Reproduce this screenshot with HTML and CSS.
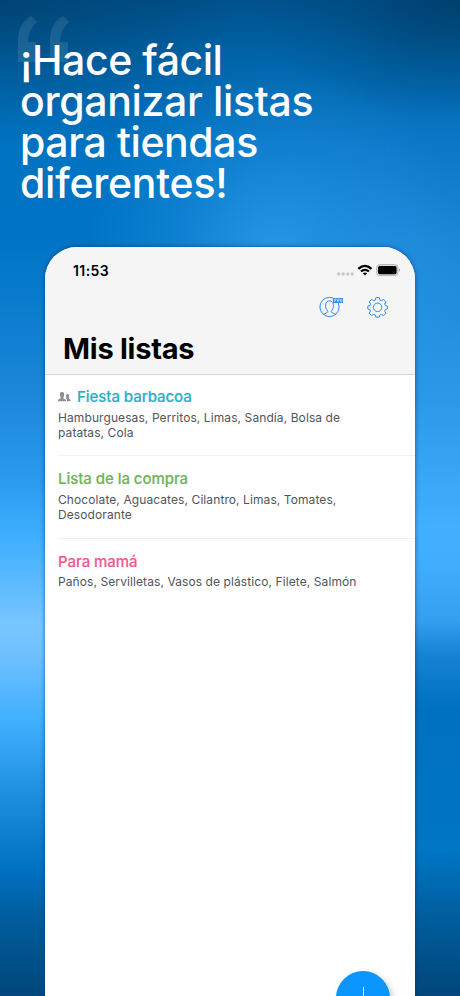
FILE: index.html
```html
<!DOCTYPE html>
<html lang="es">
<head>
<meta charset="utf-8">
<title>Mis listas</title>
<link rel="stylesheet" href="styles.css">
</head>
<body>
<main class="promo">
  <svg class="quote" width="54" height="50" viewBox="0 0 54 50" aria-hidden="true"><path d="M14 0 20.500 6C14 11 11.500 17 11 26h8v20H1V26C1 13 5 5 14 0Z"/><path d="M46 0 52.500 6C46 11 43.500 17 43 26h8v20H33V26C33 13 37 5 46 0Z"/></svg>
  <h1 class="headline"><span class="l1">¡Hace fácil</span><span class="l2">organizar listas</span><span class="l3">para tiendas</span><span class="l4">diferentes!</span></h1>
  <section class="phone">
    <header class="top">
      <div class="status">
        <span class="time">11:53</span>
        <svg class="signals" width="66" height="14" viewBox="0 0 66 14" aria-hidden="true">
          <g fill="#c8c8c8"><circle cx="2.700" cy="11" r="1.700"/><circle cx="7.200" cy="11" r="1.700"/><circle cx="11.700" cy="11" r="1.700"/><circle cx="16.200" cy="11" r="1.700"/></g>
          <path fill="#000" d="M21.500 5Q28.800-1.500 36.300 5L34.700 6.700Q28.900 1.300 23.100 6.700Z M24.200 7.700Q29 3.700 33.700 7.700L32.100 9.300Q29 6.700 25.800 9.300Z M26.700 10.300Q29 8.600 31.200 10.300L29 12.600Z"/>
          <rect x="40.700" y="1.600" width="21.200" height="11" rx="3.200" fill="#ddd" stroke="#b5b5b5"/>
          <rect x="42" y="2.900" width="18.600" height="8.400" rx="1.800"/>
          <path d="M63 5.200q2 1.700 0 3.600Z" fill="#999"/>
        </svg>
      </div>
      <div class="tools">
        <svg class="profile" width="26" height="22" viewBox="0 0 26 22" fill="none" stroke="#2b8cf0" aria-hidden="true">
          <circle cx="10.500" cy="11" r="9.600"/>
          <path d="M4.200 18.300C6 17.300 9 17 8.800 15.300 7 13.300 6.200 11 6.700 8.300 7.300 3.700 13.700 3.700 14.300 8.300 14.800 11 14 13.300 12.200 15.300 12 17 15 17.300 16.800 18.300"/>
          <path fill="#2b8cf0" stroke="none" d="M14 2h10v5H14z"/>
          <path stroke="#d8eaff" stroke-width=".6" d="M15.500 6V3h1.500v1.600h-1.500M18.500 6V3h1.700v1.500h-1.700l1.700 1.500M21.500 3h1.500v3h-1.500Z"/>
        </svg>
        <svg class="gear" width="22" height="22" viewBox="0 0 22 22" fill="none" stroke="#2b8cf0" aria-hidden="true">
          <circle cx="10.600" cy="11.300" r="4.200"/>
          <path transform="translate(-.4 .3)" stroke-linejoin="round" d="M9.300 1.300h3.400l.6 2.500 1.500.6 2.200-1.300 2.400 2.400-1.300 2.200.6 1.500 2.100.6v2.900l-2.100.6-.6 1.500 1.300 2.200-2.400 2.400-2.200-1.300-1.500.6-.6 2.100H9.300l-.6-2.100-1.500-.6L5 19.400 2.600 17l1.300-2.200-.6-1.500-2.100-.6V9.800l2.100-.6.600-1.500L2.600 5.500 5 3.100l2.200 1.300 1.500-.6Z"/>
        </svg>
      </div>
      <h2 class="title">Mis listas</h2>
    </header>
    <div class="lists">
      <article class="item">
        <h3 class="name teal"><svg width="13" height="10" viewBox="0 0 13 10" fill="#8b9095" aria-hidden="true"><path d="M4 0C6.200 0 6.500 2 5.900 4L5.400 5.600v1L8 7.800v1.500H0V7.800l2.600-1.200v-1L2.100 4C1.600 2 1.800 0 4 0Z"/><path d="M9.500 2c1.700 0 1.900 1.600 1.300 3.200v1.500l1.700 1v1.600H9V7.400L7.900 6.500l.4-1.300C7.700 3.600 7.900 2 9.500 2Z"/></svg><span>Fiesta barbacoa</span></h3>
        <p class="detail">Hamburguesas, Perritos, Limas, Sandía, Bolsa de<br>patatas, Cola</p>
      </article>
      <article class="item">
        <h3 class="name green"><span>Lista de la compra</span></h3>
        <p class="detail">Chocolate, Aguacates, Cilantro, Limas, Tomates,<br>Desodorante</p>
      </article>
      <article class="item">
        <h3 class="name pink"><span>Para mamá</span></h3>
        <p class="detail">Paños, Servilletas, Vasos de plástico, Filete, Salmón</p>
      </article>
    </div>
    <div class="add"></div>
  </section>
</main>
</body>
</html>
```
FILE: styles.css
```css
* { box-sizing: border-box; }
body { margin: 0; font-family: Inter, "Liberation Sans", sans-serif; }
h1, h2, h3, p { margin: 0; }
.promo {
  position: relative; z-index: 0; width: 460px; height: 996px; overflow: hidden; padding-top: 40px;
  background:
    radial-gradient(ellipse 240px 130px at 0 0, rgba(0,58,98,.55), rgba(0,58,98,0)),
    linear-gradient(#00508a 0, #0064a8 60px, #0073c2 150px, #0074c4 240px, #1a86d8 390px, #2b9bee 480px, #3fafff 540px, #78c6ff 625px, #6fc0ff 655px, #40b0ff 720px, #2090e0 790px, #0070c0 870px, #005c9c 920px, #00467a 996px);
}
.promo::before, .promo::after { content: ""; position: absolute; inset: 0; z-index: -1; }
.promo::before {
  background:
    radial-gradient(ellipse 220px 120px at 100% 0, rgba(0,55,95,.7), rgba(0,55,95,0)),
    linear-gradient(#005592 0, #0066ab 60px, #0a76c6 140px, #1a86d6 240px, #2b98e8 400px, #43b0ff 530px, #40acfc 570px, #349fee 620px, #1682d4 655px, #0070c0 710px, #0076c4 850px, #005c9c 920px, #00467a 996px);
  -webkit-mask-image: linear-gradient(90deg, transparent 35%, #000 88%);
  mask-image: linear-gradient(90deg, transparent 35%, #000 88%);
}
.promo::after { background: radial-gradient(ellipse 190px 190px at 275px 250px, rgba(55,165,245,.6), rgba(55,165,245,.25) 50%, rgba(55,165,245,0)); }
.quote { position: absolute; left: 17px; top: 16px; fill: rgba(255,255,255,.1); }
.headline { position: relative; display: flex; flex-direction: column; align-items: flex-start; padding-left: 20px; color: #fff; font-weight: 500; font-size: 41px; line-height: 41px; }
.headline span { white-space: nowrap; }
.l1 { letter-spacing: -.45px; }
.l2 { letter-spacing: -.35px; }
.l3 { letter-spacing: -.4px; }
.l4 { letter-spacing: -.25px; }
.phone { position: relative; width: 370px; height: 790px; margin: 43px 0 0 45px; overflow: hidden; border-radius: 32px 32px 0 0; background: #fff; box-shadow: 0 0 4px rgba(0,45,95,.65); }
.top { height: 128px; background: #f5f5f5; border-bottom: 1px solid #d7d7d7; }
.status { display: flex; justify-content: space-between; padding: 16px 13px 0 28px; height: 46px; }
.time { font-size: 14px; line-height: 16px; font-weight: 600; letter-spacing: .4px; }
.tools { display: flex; justify-content: flex-end; gap: 22px; height: 36px; padding: 3px 26px 0 0; }
.title { padding-left: 18px; font-size: 29px; line-height: 40px; font-weight: 700; letter-spacing: -.25px; }
.item { height: 82px; margin-left: 13px; padding-top: 12px; border-bottom: 1px solid #f0f0f0; }
.item:first-child { height: 81px; }
.item:nth-child(2) { height: 83px; padding-top: 13px; }
.item:last-child { border: 0; padding-top: 13px; }
.name { display: flex; align-items: center; gap: 6px; height: 19px; font-size: 15px; font-weight: 500; letter-spacing: -.05px; -webkit-text-stroke: .15px currentColor; }
.detail { margin-top: 4px; color: #50565a; font-size: 12px; line-height: 15px; letter-spacing: .09px; white-space: nowrap; }
.item:last-child .detail { margin-top: 3px; }
.teal { color: #26b0c7; }
.green { color: #70b456; }
.pink { color: #f0598f; }
.add { position: absolute; left: 291px; top: 724px; width: 54px; height: 54px; border-radius: 50%; background: linear-gradient(#fff,#fff) 50% 16px / 1px 23px no-repeat, #0a95ff; box-shadow: 3px 3px 7px rgba(0,0,0,.2); }
```
